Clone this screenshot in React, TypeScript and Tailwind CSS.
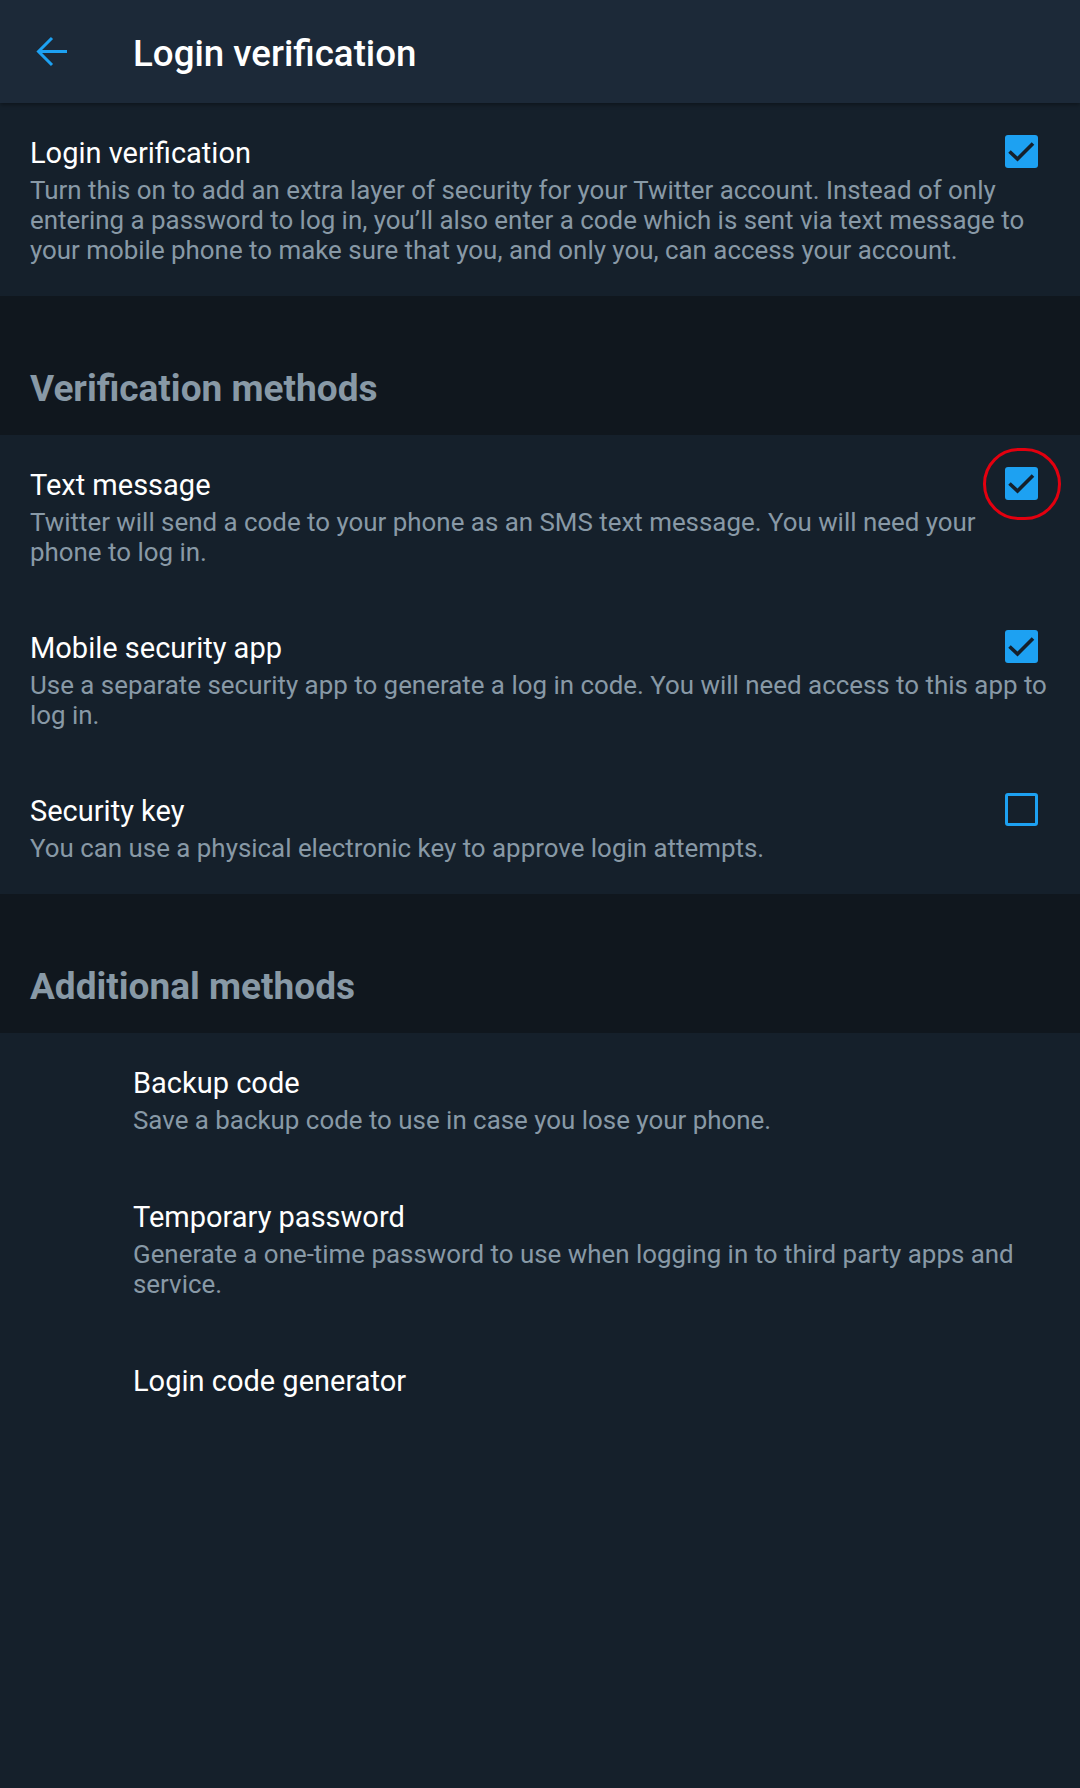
import type { ReactNode } from "react";

type Item = {
  title: string;
  desc?: string;
  checked?: boolean;
};

const verificationMethods: Item[] = [
  {
    title: "Text message",
    desc: "Twitter will send a code to your phone as an SMS text message. You will need your phone to log in.",
    checked: true,
  },
  {
    title: "Mobile security app",
    desc: "Use a separate security app to generate a log in code. You will need access to this app to log in.",
    checked: true,
  },
  {
    title: "Security key",
    desc: "You can use a physical electronic key to approve login attempts.",
    checked: false,
  },
];

const additionalMethods: Item[] = [
  { title: "Backup code", desc: "Save a backup code to use in case you lose your phone." },
  {
    title: "Temporary password",
    desc: "Generate a one-time password to use when logging in to third party apps and service.",
  },
  { title: "Login code generator" },
];

function Checkbox({ checked }: { checked?: boolean }) {
  if (!checked) {
    return <div className="mr-[14px] h-[33px] w-[33px] shrink-0 rounded-[3px] border-[3px] border-[#1da1f2]" />;
  }
  return (
    <div className="mr-[14px] h-[33px] w-[33px] shrink-0 rounded-[3px] bg-[#1da1f2]">
      <svg width="33" height="33" viewBox="0 0 33 33">
        <polyline points="4.5,16.5 12.5,24 28,8.5" fill="none" stroke="#15202b" strokeWidth="3.6" />
      </svg>
    </div>
  );
}

function Row({ item, indent, withBox }: { item: Item; indent?: boolean; withBox?: boolean }) {
  return (
    <div className={indent ? "pt-8 pb-8 pl-[133px] pr-[28px]" : "pt-8 pb-[31px] pl-[30px] pr-[28px]"}>
      <div className="flex items-start justify-between">
        <div className="text-[29px] leading-[36px] text-white">{item.title}</div>
        {withBox && <Checkbox checked={item.checked} />}
      </div>
      {item.desc && <p className="mt-1 text-[25.9px] leading-[30px] text-[#8899a6]">{item.desc}</p>}
    </div>
  );
}

function SectionHeader({ children }: { children: ReactNode }) {
  return (
    <div className="bg-[#10171e] px-[30px] pt-[71px] pb-6">
      <h2 className="text-[37px] font-bold leading-[44px] text-[#8899a6]">{children}</h2>
    </div>
  );
}

export default function App() {
  return (
    <div className="relative min-h-[1788px] w-[1080px] bg-[#15202b] font-['Roboto','Noto_Sans',sans-serif]">
      {/* Top bar */}
      <header className="relative z-10 flex h-[103px] items-center bg-[#1c2938] shadow-[0_2px_4px_rgba(0,0,0,0.35)]">
        <div className="w-[133px] pl-[36px]">
          <svg width="32" height="32" viewBox="0 0 32 32" fill="none" stroke="#1da1f2" strokeWidth="3">
            <path d="M31 15.5H2.5" />
            <path d="M16 2L2.5 15.5L16 29" />
          </svg>
        </div>
        <h1 className="pt-1 text-[36.7px] font-medium text-white">Login verification</h1>
      </header>

      {/* Master switch */}
      <Row
        withBox
        item={{
          title: "Login verification",
          desc: "Turn this on to add an extra layer of security for your Twitter account. Instead of only entering a password to log in, you’ll also enter a code which is sent via text message to your mobile phone to make sure that you, and only you, can access your account.",
          checked: true,
        }}
      />

      <SectionHeader>Verification methods</SectionHeader>
      {verificationMethods.map((m) => (
        <Row key={m.title} item={m} withBox />
      ))}

      <SectionHeader>Additional methods</SectionHeader>
      {additionalMethods.map((m) => (
        <Row key={m.title} item={m} indent />
      ))}

      {/* annotation ring */}
      <div className="absolute left-[983px] top-[448px] h-[72px] w-[78px] rounded-full border-[3px] border-[#e3000f]" />
    </div>
  );
}
